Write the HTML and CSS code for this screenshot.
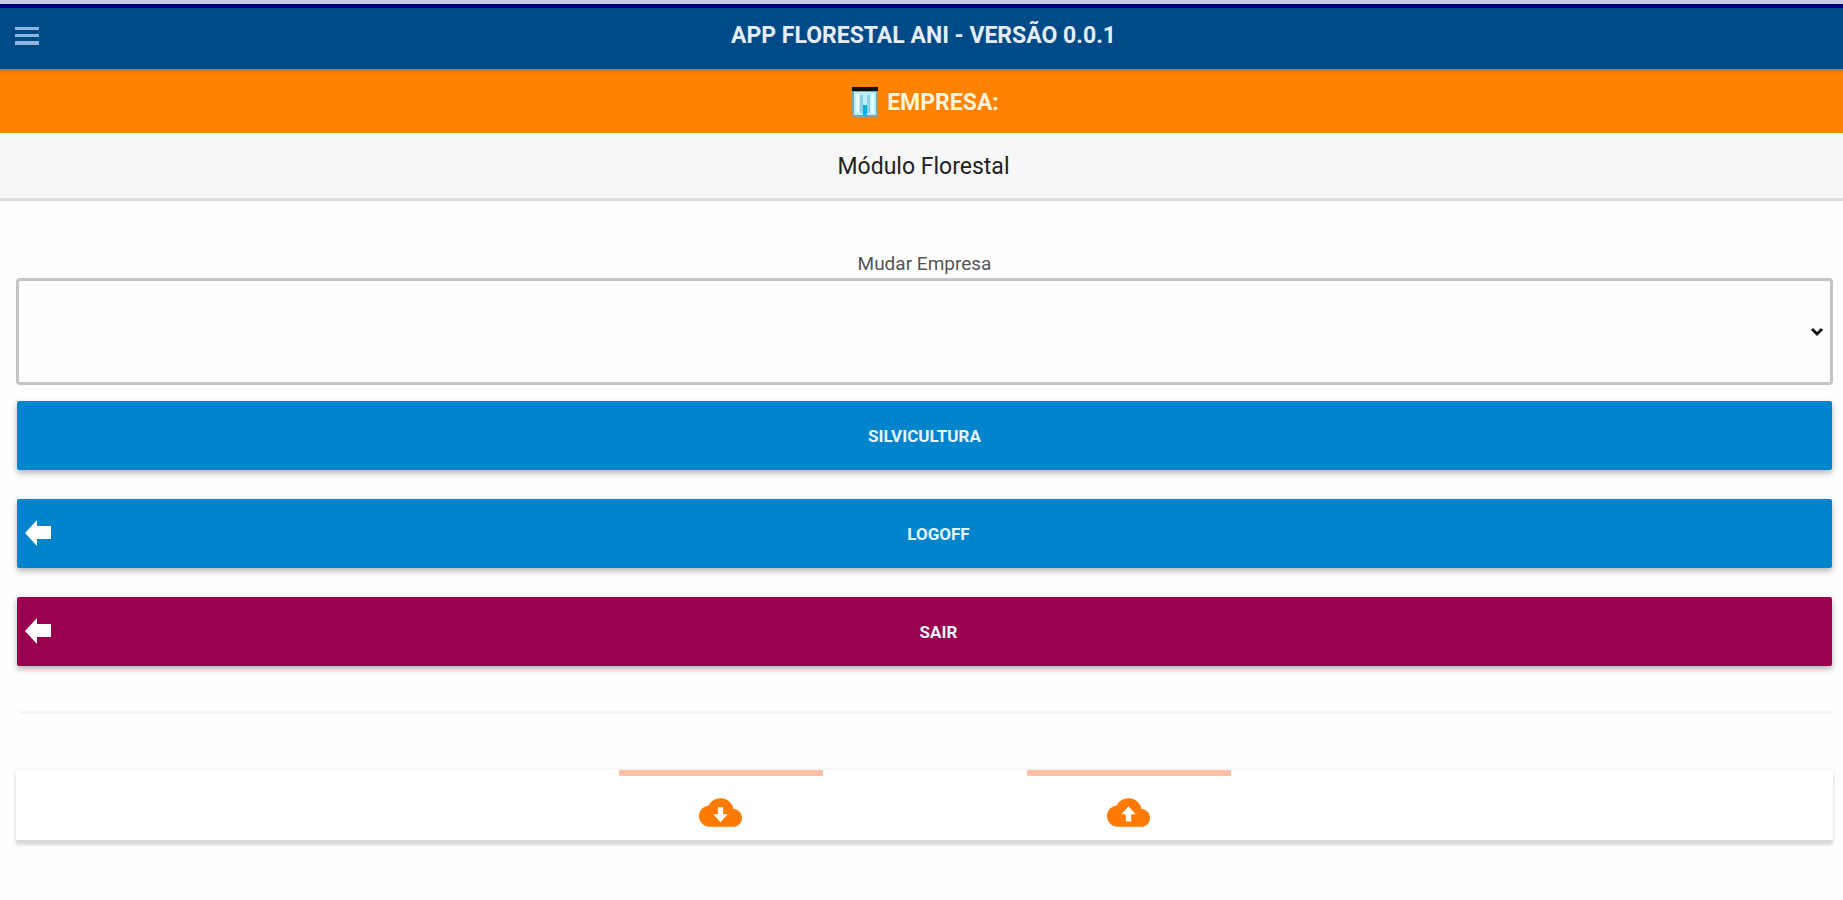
FILE: index.html
```html
<!DOCTYPE html>
<html lang="pt-BR">
  <head>
    <meta charset="UTF-8" />
    <meta name="viewport" content="width=device-width, initial-scale=1.0" />
    <title>App Florestal ANI</title>
    <link rel="stylesheet" href="styles.css">
  </head>
  <body>
    <header class="navbar">
      <button class="menu-button" type="button" aria-label="Menu">
        <svg class="menu-icon" viewBox="0 0 26 20">
          <path d="M1 1h24v3H1zM1 8h24v3H1zM1 15h24v4H1z" />
        </svg>
      </button>
      <h1 class="navbar-title">APP FLORESTAL ANI - VERSÃO 0.0.1</h1>
    </header>

    <div class="company-bar">
      <svg class="company-icon" viewBox="0 0 26 30">
        <path fill="#7fa6a0" d="M0 3h26v27H0z" />
        <path fill="#bdeeff" d="M2 5h22v23H2z" />
        <path fill="#111" d="M0 0h26v4H0z" />
        <path fill="#8fd0e6" d="M8 8h3v18H8zM15 8h3v18h-3z" />
        <path fill="#eafaff" d="M4 7h3v19H4zM19 7h3v19h-3z" />
        <path fill="#00b4d8" d="M11 18h4v11h-4z" />
      </svg>
      <span>EMPRESA:</span>
    </div>

    <h2 class="module-bar">Módulo Florestal</h2>

    <main class="content">
      <label class="field-label" for="empresa">Mudar Empresa</label>
      <div class="select-box">
        <select class="company-select" id="empresa">
          <option value=""></option>
        </select>
        <svg class="select-arrow" viewBox="0 0 14 10">
          <path d="M2 2l5 5 5-5" />
        </svg>
      </div>

      <div class="actions">
        <button class="btn" type="button">SILVICULTURA</button>
        <button class="btn btn-with-icon" type="button">
          <svg class="btn-icon" viewBox="0 0 26 26">
            <path d="M0 13L12 0v6h14v13H12v7z" />
          </svg>
          LOGOFF
        </button>
        <button class="btn btn-with-icon btn-exit" type="button">
          <svg class="btn-icon" viewBox="0 0 26 26">
            <path d="M0 13L12 0v6h14v13H12v7z" />
          </svg>
          SAIR
        </button>
      </div>

      <hr class="divider" />

      <nav class="tabs">
        <a class="tab" href="#download" aria-label="Download">
          <svg class="tab-icon" viewBox="0 0 24 24">
            <path d="M19.35 10.04C18.67 6.59 15.64 4 12 4 9.11 4 6.6 5.64 5.35 8.04 2.34 8.36 0 10.91 0 14c0 3.31 2.69 6 6 6h13c2.76 0 5-2.24 5-5 0-2.64-2.05-4.78-4.65-4.96zM16 13l-4 4.5-4-4.5h2.5V9h3v4z" />
          </svg>
        </a>
        <a class="tab" href="#upload" aria-label="Upload">
          <svg class="tab-icon" viewBox="0 0 24 24">
            <path d="M19.35 10.04C18.67 6.59 15.64 4 12 4 9.11 4 6.6 5.64 5.35 8.04 2.34 8.36 0 10.91 0 14c0 3.31 2.69 6 6 6h13c2.76 0 5-2.24 5-5 0-2.64-2.05-4.78-4.65-4.96zM13.5 13v4h-3v-4H8l4-4.5 4 4.5z" />
          </svg>
        </a>
      </nav>
    </main>
  </body>
</html>
```
FILE: styles.css
```css
* {
  margin: 0;
  padding: 0;
  box-sizing: border-box;
}

body {
  min-height: 100vh;
  background-color: #fefefe;
  color: #222;
  font-family: Roboto, sans-serif;
  border-top: 4px solid #c9cae3;
}

.navbar {
  display: grid;
  grid-template-columns: 48px 1fr 44px;
  align-items: center;
  height: 65px;
  padding-bottom: 6px;
  background-color: #004b87;
  border-top: 4px solid #00007f;
  color: #e6edfa;
}

.menu-button {
  height: 48px;
  padding-left: 14px;
  background: none;
  border: none;
  cursor: pointer;
}

.menu-icon {
  display: block;
  width: 26px;
  height: 20px;
  fill: #8fb5e3;
}

.navbar-title {
  font-size: 23px;
  line-height: 28px;
  font-weight: 700;
  text-align: center;
}

.company-bar {
  display: flex;
  justify-content: center;
  align-items: center;
  gap: 9px;
  height: 64px;
  padding: 2px 0 0 8px;
  background-color: #ff8200;
  box-shadow: inset 0 4px 3px -2px rgba(0, 0, 0, 0.2);
  color: #fff4dc;
  font-size: 23px;
  font-weight: 700;
}

.company-icon {
  width: 26px;
  height: 30px;
}

.module-bar {
  height: 68px;
  padding-left: 4px;
  background-color: #f7f7f7;
  border-bottom: 3px solid #dedede;
  color: #222;
  font-size: 23px;
  font-weight: 400;
  line-height: 68px;
  text-align: center;
}

.content {
  padding: 51px 10px 24px 16px;
}

.field-label {
  display: block;
  color: #555;
  font-size: 19px;
  line-height: 24px;
  text-align: center;
  margin-bottom: 2px;
}

.select-box {
  position: relative;
}

.company-select {
  display: block;
  width: 100%;
  height: 107px;
  background-color: #fefefe;
  border: 3px solid #c4c4c4;
  border-radius: 4px;
  appearance: none;
}

.select-arrow {
  position: absolute;
  top: 49px;
  right: 9px;
  width: 14px;
  height: 10px;
  fill: none;
  stroke: #111;
  stroke-width: 3;
  pointer-events: none;
}

.actions {
  display: flex;
  flex-direction: column;
  gap: 29px;
  margin-top: 16px;
  padding: 0 1px;
}

.btn {
  position: relative;
  height: 69px;
  background-color: #0085cc;
  border: none;
  border-radius: 2px;
  box-shadow: 0 3px 6px rgba(0, 0, 0, 0.3);
  color: #e6f5ff;
  font-family: inherit;
  font-size: 17px;
  font-weight: 700;
  cursor: pointer;
}

.btn-with-icon {
  padding-left: 28px;
}

.btn-exit {
  background-color: #99004d;
}

.btn-icon {
  position: absolute;
  top: 21px;
  left: 8px;
  width: 26px;
  height: 26px;
  fill: #fff;
}

.divider {
  margin: 45px 1px 0 4px;
  border: none;
  border-top: 3px solid #f5f5f5;
}

.tabs {
  display: flex;
  justify-content: center;
  gap: 204px;
  height: 70px;
  margin-top: 56px;
  background-color: #fff;
  box-shadow: 0 5px 3px #d9d9d9, 0 0 4px rgba(0, 0, 0, 0.1);
}

.tab {
  display: flex;
  justify-content: center;
  align-items: center;
  width: 204px;
  border-top: 6px solid #ffc0a8;
}

.tab-icon {
  width: 43px;
  height: 43px;
  margin-top: 8px;
  fill: #ff7a00;
}
```
